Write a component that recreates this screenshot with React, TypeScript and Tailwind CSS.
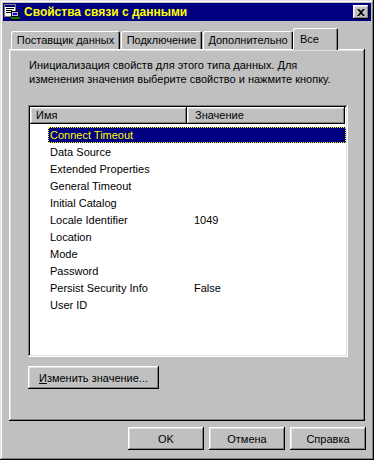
import React from "react";

const raised =
  "shadow-[inset_-1px_-1px_#000,inset_1px_1px_#fff,inset_-2px_-2px_#808080,inset_2px_2px_#dfdfdf]";
const frame =
  "shadow-[inset_-1px_-1px_#000,inset_1px_1px_#dfdfdf,inset_-2px_-2px_#808080,inset_2px_2px_#fff]";
const sunken =
  "shadow-[inset_-1px_-1px_#fff,inset_1px_1px_#808080,inset_-2px_-2px_#dfdfdf,inset_2px_2px_#000]";

const rows: { name: string; value?: string }[] = [
  { name: "Connect Timeout" },
  { name: "Data Source" },
  { name: "Extended Properties" },
  { name: "General Timeout" },
  { name: "Initial Catalog" },
  { name: "Locale Identifier", value: "1049" },
  { name: "Location" },
  { name: "Mode" },
  { name: "Password" },
  { name: "Persist Security Info", value: "False" },
  { name: "User ID" },
];

const tabs = [
  { label: "Поставщик данных", w: "w-[109px] mr-px" },
  { label: "Подключение", w: "w-[81px] mr-px" },
  { label: "Дополнительно", w: "w-[90px]" },
];

const AppIcon = () => (
  <svg width="16" height="16" viewBox="0 0 16 16" className="shrink-0">
    <rect x="0.5" y="0.5" width="11" height="12" fill="#fff" stroke="#808080" />
    <rect x="1" y="1" width="10" height="2" fill="#000080" />
    <rect x="2" y="4" width="8" height="1" fill="#000" />
    <rect x="2" y="6" width="6" height="1" fill="#000" />
    <rect x="2" y="8" width="7" height="1" fill="#000" />
    <rect x="7.5" y="7.5" width="7" height="5" fill="#c0c0c0" stroke="#000" />
    <rect x="9" y="9" width="4" height="2" fill="#0000ff" />
    <rect x="7" y="13" width="9" height="2" fill="#008000" />
    <rect x="6" y="15" width="10" height="1" fill="#000" />
  </svg>
);

const Button = ({ children, w }: { children: React.ReactNode; w: string }) => (
  <button
    className={`${w} h-[23px] bg-[#c0c0c0] ${raised} flex items-center justify-center text-[11px] font-normal text-black`}
  >
    {children}
  </button>
);

export default function App() {
  return (
    <div
      className={`w-[374px] h-[460px] bg-[#c0c0c0] p-[3px] flex flex-col ${frame} font-['Liberation_Sans',Arial,sans-serif] text-[11px] leading-[14px] text-black select-none`}
    >
      {/* title bar */}
      <div className="h-[18px] bg-[#000080] flex items-center pl-[1px] pr-[2px]">
        <AppIcon />
        <span className="ml-[4px] font-bold text-[#ffff00] text-[12px]">
          Свойства связи с данными
        </span>
        <div className="flex-1" />
        <div className={`w-[16px] h-[14px] bg-[#c0c0c0] ${raised} flex items-center justify-center`}>
          <svg width="8" height="7" viewBox="0 0 8 7">
            <path d="M0 0h2l2 2 2-2h2L5 3.5 8 7H6L4 5 2 7H0l3-3.5z" fill="#000" />
          </svg>
        </div>
      </div>

      {/* tabs */}
      <div className="mt-[7px] mx-[6px] flex items-end h-[21px] pl-[2px]">
        {tabs.map((t) => (
          <div
            key={t.label}
            className={`${t.w} h-[18px] rounded-t-[2px] bg-[#c0c0c0] shadow-[inset_1px_1px_#fff,inset_-1px_0_#000,inset_-2px_0_#808080] flex items-center justify-center`}
          >
            {t.label}
          </div>
        ))}
        <div className="relative z-10 w-[45px] h-[22px] -mb-[1px] rounded-t-[2px] bg-[#c0c0c0] shadow-[inset_1px_1px_#fff,inset_-1px_0_#000,inset_-2px_0_#808080] flex items-start pt-[4px] pl-[7px]">
          Все
        </div>
      </div>

      {/* panel */}
      <div className={`mx-[6px] h-[372px] bg-[#c0c0c0] ${raised} pt-[9px] pl-[20px] pr-[16px] flex flex-col`}>
        <p className="leading-[14px]">
          Инициализация свойств для этого типа данных. Для изменения значения выберите свойство и нажмите кнопку.
        </p>

        <div className={`mt-[19px] -ml-px w-[320px] h-[252px] bg-white ${sunken} p-[2px] flex flex-col`}>
          <div className="flex h-[17px] shrink-0">
            <div className={`w-[157px] bg-[#c0c0c0] ${raised} pl-[6px] leading-[17px]`}>Имя</div>
            <div className={`w-[158px] bg-[#c0c0c0] ${raised} pl-[8px] leading-[17px]`}>Значение</div>
          </div>
          <div className="pt-[2px] flex flex-col">
            {rows.map((r, i) => (
              <div key={r.name} className="flex h-[17px] items-center pl-[18px]">
                {i === 0 ? (
                  <div className="flex-1 h-[16px] bg-[#000080] text-[#ffff00] outline outline-1 outline-dotted outline-[#ffff00] -outline-offset-1 flex items-center pl-[2px]">
                    {r.name}
                  </div>
                ) : (
                  <>
                    <span className="w-[139px] pl-[2px]">{r.name}</span>
                    <span className="pl-[7px]">{r.value}</span>
                  </>
                )}
              </div>
            ))}
          </div>
        </div>

        <div className="mt-[9px] -ml-px">
          <Button w="w-[131px]">
            <span>
              <span className="underline">И</span>зменить значение...
            </span>
          </Button>
        </div>
      </div>

      {/* bottom buttons */}
      <div className="mt-[6px] flex justify-end gap-[5px] pr-[5px]">
        <Button w="w-[76px]">OK</Button>
        <Button w="w-[76px]">Отмена</Button>
        <Button w="w-[76px]">Справка</Button>
      </div>
    </div>
  );
}
